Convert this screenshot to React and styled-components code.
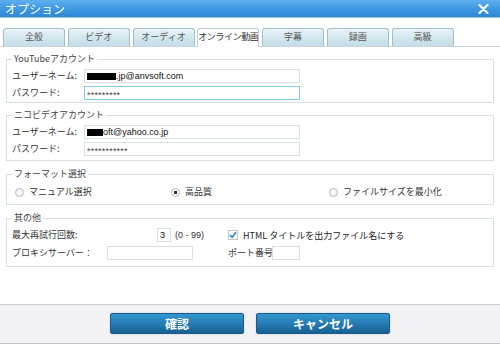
import React from "react";
import styled, { createGlobalStyle } from "styled-components";

const Global = createGlobalStyle`
  html, body { margin: 0; padding: 0; background: #fff; }
  body {
    font-family: "Noto Sans CJK JP", "Liberation Sans", sans-serif;
    font-size: 9px;
    color: #333;
  }
`;

const Window = styled.div`
  width: 500px;
  height: 344px;
  display: flex;
  flex-direction: column;
  background: #fff;
  overflow: hidden;
`;

const TitleBar = styled.div`
  height: 17px;
  display: flex;
  align-items: center;
  justify-content: space-between;
  padding: 0 11px 0 5px;
  background: linear-gradient(#5cb0ee, #3a94df 60%, #2f88d6);
  border-bottom: 1px solid #a9c3d8;
  color: #fff;
  font-size: 12px;
  line-height: 17px;
`;

const TabBar = styled.div`
  display: flex;
  gap: 2.75px;
  padding: 10px 0 0 3px;
  border-bottom: 1px solid #cfd6db;
`;

const Tab = styled.div`
  width: 62px;
  box-sizing: border-box;
  border: 1px solid ${p => (p.$active ? "#b9ccd6" : "#9fbfcd")};
  border-bottom: none;
  border-radius: 3px 3px 0 0;
  background: ${p =>
    p.$active ? "#fff" : "linear-gradient(#e9f4f8, #d3e7ee 50%, #c3dde7)"};
  color: ${p => (p.$active ? "#333" : "#555")};
  font-size: 9px;
  line-height: 16px;
  text-align: center;
  letter-spacing: ${p => (p.$active ? "-0.4px" : "0")};
  white-space: nowrap;
  overflow: hidden;
  margin-bottom: ${p => (p.$active ? "-1px" : "0")};
  height: ${p => (p.$active ? "19px" : "18px")};
`;

const Content = styled.div`
  padding: 0 6px;
  display: flex;
  flex-direction: column;
`;

const Group = styled.fieldset`
  margin: ${p => p.$top || 6}px 0 0;
  padding: ${p => p.$pad || "4px 5px 2px"};
  border: 1px solid #d7dfe5;
  min-width: 0;
  display: flex;
  flex-direction: column;
  gap: ${p => p.$gap || 3}px;
`;

const Legend = styled.legend`
  padding: 0 2px;
  line-height: 12px;
  color: #444;
`;

const Row = styled.div`
  display: flex;
  align-items: center;
  height: 14px;
`;

const Label = styled.span`
  width: ${p => p.$w}px;
  flex: none;
  color: #333;
  line-height: 12px;
  white-space: nowrap;
`;

const Field = styled.div`
  width: ${p => p.$w}px;
  height: 14px;
  flex: none;
  box-sizing: border-box;
  display: flex;
  align-items: center;
  padding-left: 2px;
  border: 1px solid ${p => (p.$focus ? "#82cde6" : "#d9e0e5")};
  background: #fff;
  font-family: "Liberation Sans", sans-serif;
  font-size: 9px;
  color: #111;
  white-space: nowrap;
`;

const Redact = styled.span`
  display: inline-block;
  width: ${p => p.$w}px;
  height: 7px;
  background: #000;
`;

const Stars = styled.span`
  font-size: 9px;
  color: #444;
  letter-spacing: 0.2px;
  padding-top: 3px;
`;

const RadioRow = styled.div`
  display: grid;
  grid-template-columns: 156px 158px auto;
  padding-left: 3px;
  height: 12px;
  align-items: center;
`;

const RadioItem = styled.label`
  display: flex;
  align-items: center;
  gap: 5px;
  line-height: 12px;
`;

const Dot = styled.span`
  width: 9px;
  height: 9px;
  box-sizing: border-box;
  border-radius: 50%;
  border: 1px solid #b3bcc4;
  background: radial-gradient(circle, ${p => (p.$on ? "#333 0 1.6px, #f4f5f6 2px" : "#fdfdfd 0, #e6e9ec")} 100%);
  flex: none;
`;

const Note = styled.span`
  font-family: "Liberation Sans", sans-serif;
  font-size: 9px;
  color: #333;
  margin-left: 4px;
  width: ${p => p.$w || "auto"};
  flex: none;
`;

const Check = styled.span`
  width: 10px;
  height: 10px;
  box-sizing: border-box;
  border: 1px solid #bcc6cd;
  background: #fff;
  display: inline-flex;
  align-items: center;
  justify-content: center;
  margin-right: 5px;
  flex: none;
`;

const CheckText = styled.span`
  font-size: 9px;
  color: #222;
  white-space: nowrap;
`;

const Footer = styled.div`
  margin-top: auto;
  height: 30px;
  box-sizing: content-box;
  border-top: 1px solid #c8ccd1;
  border-bottom: 1px solid #bfc4c9;
  background: #f2f2f5;
  display: flex;
  justify-content: center;
  align-items: flex-start;
  gap: 12px;
  padding-top: 8px;
`;

const Button = styled.button`
  width: 134px;
  height: 21px;
  border: 1px solid #1b5b8b;
  border-radius: 2px;
  background: linear-gradient(#3397cf, #2479b3 55%, #18618f);
  box-shadow: 0 0 0 1px #e4e8ec;
  color: #fff;
  font-family: "Noto Sans CJK JP", sans-serif;
  font-size: 12px;
  font-weight: bold;
  line-height: 19px;
  padding: 0;
`;

const tabs = ["全般", "ビデオ", "オーディオ", "オンライン動画", "字幕", "録画", "高級"];

export default function App() {
  return (
    <Window>
      <Global />
      <TitleBar>
        <span>オプション</span>
        <svg width="11" height="10" viewBox="0 0 11 10">
          <path d="M1.5 1 L9.5 9 M9.5 1 L1.5 9" stroke="#fff" strokeWidth="2.2" strokeLinecap="round" />
        </svg>
      </TitleBar>
      <TabBar>
        {tabs.map(t => (
          <Tab key={t} $active={t === "オンライン動画"}>{t}</Tab>
        ))}
      </TabBar>
      <Content>
        <Group>
          <Legend>YouTubeアカウント</Legend>
          <Row>
            <Label $w={72}>ユーザーネーム:</Label>
            <Field $w={216}><Redact $w={29} />.jp@anvsoft.com</Field>
          </Row>
          <Row>
            <Label $w={72}>パスワード:</Label>
            <Field $w={216} $focus><Stars>*********</Stars></Field>
          </Row>
        </Group>
        <Group $pad="4px 5px 4px">
          <Legend>ニコビデオアカウント</Legend>
          <Row>
            <Label $w={72}>ユーザーネーム:</Label>
            <Field $w={216}><Redact $w={16} />oft@yahoo.co.jp</Field>
          </Row>
          <Row>
            <Label $w={72}>パスワード:</Label>
            <Field $w={216}><Stars>***********</Stars></Field>
          </Row>
        </Group>
        <Group $top={7} $pad="6px 5px 6px">
          <Legend>フォーマット選択</Legend>
          <RadioRow>
            <RadioItem><Dot />マニュアル選択</RadioItem>
            <RadioItem><Dot $on />高品質</RadioItem>
            <RadioItem><Dot />ファイルサイズを最小化</RadioItem>
          </RadioRow>
        </Group>
        <Group $top={7} $pad="4px 5px 6px" $gap={4}>
          <Legend>其の他</Legend>
          <Row>
            <Label $w={145}>最大再試行回数:</Label>
            <Field $w={14}>3</Field>
            <Note $w="53px">(0 - 99)</Note>
            <Check>
              <svg width="9" height="8" viewBox="0 0 9 8">
                <path d="M1 4 L3.5 6.5 L8 1" fill="none" stroke="#2b88c9" strokeWidth="1.8" />
              </svg>
            </Check>
            <CheckText>HTML タイトルを出力ファイル名にする</CheckText>
          </Row>
          <Row>
            <Label $w={95}>プロキシサーバー：</Label>
            <Field $w={86} />
            <Label $w={44} style={{ marginLeft: 35 }}>ポート番号</Label>
            <Field $w={28} />
          </Row>
        </Group>
      </Content>
      <Footer>
        <Button>確認</Button>
        <Button>キャンセル</Button>
      </Footer>
    </Window>
  );
}
